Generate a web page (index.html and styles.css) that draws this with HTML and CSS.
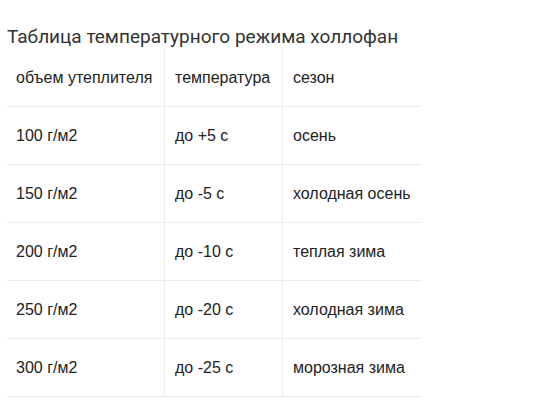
FILE: index.html
```html
<!DOCTYPE html>
<html lang="ru">
<head>
<meta charset="utf-8">
<title>Таблица температурного режима холлофан</title>
<link rel="stylesheet" href="styles.css">
</head>
<body>
<div class="page">
  <h3 class="title">Таблица температурного режима холлофан</h3>
  <table class="temp-table">
    <colgroup>
      <col class="c1"><col class="c2"><col class="c3">
    </colgroup>
    <tbody>
      <tr><td>объем утеплителя</td><td>температура</td><td>сезон</td></tr>
      <tr><td>100 г/м2</td><td>до +5 с</td><td>осень</td></tr>
      <tr><td>150 г/м2</td><td>до -5 с</td><td>холодная осень</td></tr>
      <tr><td>200 г/м2</td><td>до -10 с</td><td>теплая зима</td></tr>
      <tr><td>250 г/м2</td><td>до -20 с</td><td>холодная зима</td></tr>
      <tr><td>300 г/м2</td><td>до -25 с</td><td>морозная зима</td></tr>
    </tbody>
  </table>
</div>
</body>
</html>
```
FILE: styles.css
```css
html, body {
  margin: 0;
  padding: 0;
  background: #fff;
}
.page {
  padding: 25px 0 0 7px;
}
.title {
  margin: 0;
  font-family: Roboto, "Liberation Sans", sans-serif;
  font-weight: 400;
  font-size: 19px;
  line-height: 24px;
  color: #333;
  height: 25px;
}
.temp-table {
  border-collapse: separate;
  border-spacing: 0;
  table-layout: fixed;
  width: 414px;
  font-family: "Liberation Sans", Arial, sans-serif;
  font-size: 16px;
  color: #222;
}
.c1 { width: 158px; }
.c2 { width: 118px; }
.c3 { width: 138px; }
.temp-table td {
  box-sizing: border-box;
  height: 58px;
  padding: 0 4px 0 10px;
  vertical-align: middle;
  border-bottom: 1px solid #ebebeb;
  white-space: nowrap;
}
.temp-table td:first-child {
  padding-left: 9px;
}
.temp-table td:not(:last-child) {
  border-right: 1px solid #ebebeb;
}
.temp-table tr:first-child td {
  height: 57px;
}
```
